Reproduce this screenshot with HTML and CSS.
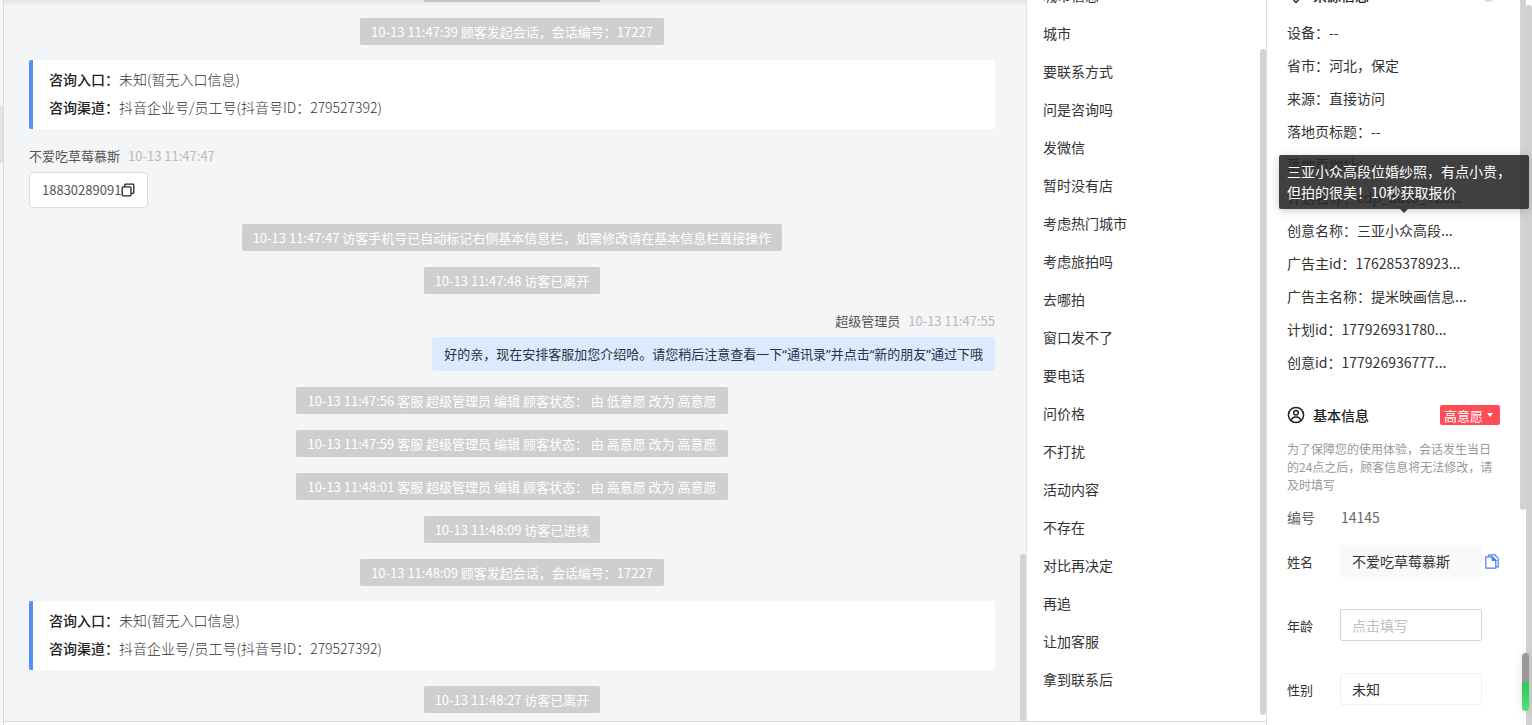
FILE: index.html
```
<!DOCTYPE html>
<html lang="zh-CN">
<head>
    <meta charset="UTF-8">
    <meta name="viewport" content="width=device-width, initial-scale=1.0">
    <title>客服会话</title>
    <link rel="stylesheet" href="styles.css">
</head>
<body>

<div class="gutter"><span class="gutter-mark"></span></div>

<div class="workspace">
    <main class="chat">
        <div class="chat-list">
            <div class="notice">10-13 11:47:36 访客已进线</div>
            <div class="notice">10-13 11:47:39 顾客发起会话，会话编号：17227</div>
            <div class="entry-card">
                <p><strong>咨询入口：</strong>未知(暂无入口信息)</p>
                <p><strong>咨询渠道：</strong>抖音企业号/员工号(抖音号ID：279527392)</p>
            </div>
            <div class="message">
                <div class="message-meta"><span class="author">不爱吃草莓慕斯</span><time>10-13 11:47:47</time></div>
                <div class="bubble visitor">18830289091<button class="icon-btn" type="button" aria-label="复制">
                    <svg width="14" height="14" viewBox="0 0 14 14" fill="none" stroke="#222" stroke-width="1.3"><rect x="1.2" y="3.8" width="8.8" height="9" rx="1"/><path d="M3.8 3.6V2a.8.8 0 0 1 .8-.8H12a.8.8 0 0 1 .8.8v7.6a.8.8 0 0 1-.8.8h-1.8"/></svg>
                </button></div>
            </div>
            <div class="notice">10-13 11:47:47 访客手机号已自动标记右侧基本信息栏，如需修改请在基本信息栏直接操作</div>
            <div class="notice">10-13 11:47:48 访客已离开</div>
            <div class="message mine">
                <div class="message-meta"><span class="author">超级管理员</span><time>10-13 11:47:55</time></div>
                <div class="bubble staff">好的亲，现在安排客服加您介绍哈。请您稍后注意查看一下“通讯录”并点击“新的朋友”通过下哦</div>
            </div>
            <div class="notice">10-13 11:47:56 客服 超级管理员 编辑 顾客状态： 由 低意愿 改为 高意愿</div>
            <div class="notice">10-13 11:47:59 客服 超级管理员 编辑 顾客状态： 由 高意愿 改为 高意愿</div>
            <div class="notice">10-13 11:48:01 客服 超级管理员 编辑 顾客状态： 由 高意愿 改为 高意愿</div>
            <div class="notice">10-13 11:48:09 访客已进线</div>
            <div class="notice">10-13 11:48:09 顾客发起会话，会话编号：17227</div>
            <div class="entry-card">
                <p><strong>咨询入口：</strong>未知(暂无入口信息)</p>
                <p><strong>咨询渠道：</strong>抖音企业号/员工号(抖音号ID：279527392)</p>
            </div>
            <div class="notice">10-13 11:48:27 访客已离开</div>
        </div>
        <span class="scroll-thumb chat-thumb"></span>
    </main>

    <aside class="quick">
        <ul class="quick-list">
            <li>城市信息</li>
            <li>城市</li>
            <li>要联系方式</li>
            <li>问是咨询吗</li>
            <li>发微信</li>
            <li>暂时没有店</li>
            <li>考虑热门城市</li>
            <li>考虑旅拍吗</li>
            <li>去哪拍</li>
            <li>窗口发不了</li>
            <li>要电话</li>
            <li>问价格</li>
            <li>不打扰</li>
            <li>活动内容</li>
            <li>不存在</li>
            <li>对比再决定</li>
            <li>再追</li>
            <li>让加客服</li>
            <li>拿到联系后</li>
        </ul>
        <span class="scroll-thumb quick-thumb"></span>
    </aside>
</div>

<aside class="info">
    <div class="info-body">
        <h3 class="section-title visit-title">
            <svg width="18" height="18" viewBox="0 0 18 18" fill="none" stroke="#333" stroke-width="1.6"><path d="M9 16.5C5.500 13 3.500 10.500 3.500 7.500a5.500 5.500 0 0 1 11 0c0 3-2 5.500-5.500 9z"/><circle cx="9" cy="7.500" r="2"/></svg>
            <span>来源信息</span>
            <i class="title-dot"></i>
        </h3>
        <ul class="visit-list">
            <li>设备：--</li>
            <li>省市：河北，保定</li>
            <li>来源：直接访问</li>
            <li>落地页标题：--</li>
            <li>落地页地址：--</li>
            <li>计划名称：cdp_auto_728...</li>
            <li class="tip-anchor">创意名称：三亚小众高段...
                <div class="tooltip" role="tooltip">三亚小众高段位婚纱照，有点小贵，但拍的很美！10秒获取报价</div>
            </li>
            <li>广告主id：176285378923...</li>
            <li>广告主名称：提米映画信息...</li>
            <li>计划id：177926931780...</li>
            <li>创意id：177926936777...</li>
        </ul>

        <h3 class="section-title">
            <svg width="18" height="18" viewBox="0 0 18 18" fill="none" stroke="#222" stroke-width="1.5"><circle cx="9" cy="9" r="7.600"/><circle cx="9" cy="6.800" r="2.300"/><path d="M4.200 14.200c.5-2.200 2.200-3.200 4.800-3.200s4.300 1 4.800 3.200"/></svg>
            <span>基本信息</span>
            <button class="level-btn" type="button">高意愿<i class="caret"></i></button>
        </h3>
        <p class="hint">为了保障您的使用体验，会话发生当日的24点之后，顾客信息将无法修改，请及时填写</p>

        <div class="number-row"><span class="label">编号</span><span>14145</span></div>
        <div class="form-row">
            <label for="name">姓名</label>
            <input id="name" class="filled" type="text" value="不爱吃草莓慕斯">
            <button class="icon-btn" type="button" aria-label="复制姓名">
                <svg width="14" height="15" viewBox="0 0 14 15" fill="none" stroke="#4c7df0" stroke-width="1.2"><path d="M3.800 2.800V.8h6l3.400 3.400v8.600h-2"/><path d="M.8 2.800h6.400l3.600 3.600v7.800h-10z"/><path d="M7.200 2.800v3.600h3.600z" fill="#4c7df0"/></svg>
            </button>
        </div>
        <div class="form-row">
            <label for="age">年龄</label>
            <input id="age" type="text" placeholder="点击填写">
        </div>
        <div class="form-row">
            <label for="gender">性别</label>
            <select id="gender">
                <option>未知</option>
                <option>男</option>
                <option>女</option>
            </select>
        </div>
    </div>
    <span class="scroll-thumb info-thumb"></span>
    <span class="page-thumb"></span>
    <span class="meter"></span>
</aside>

</body>
</html>
```
FILE: styles.css
```
* {
    box-sizing: border-box;
}
body {
    margin: 0;
    height: 100vh;
    display: flex;
    overflow: hidden;
    background-color: #ffffff;
    font-family: "Noto Sans CJK SC", sans-serif;
    font-size: 14px;
    color: #333333;
}
ul, p, h3 {
    margin: 0;
    padding: 0;
    list-style: none;
}
button, input, select {
    font-family: inherit;
}
.icon-btn {
    display: flex;
    padding: 0;
    border: none;
    background: none;
    cursor: pointer;
}
.scroll-thumb {
    position: absolute;
    right: 0;
    width: 6px;
    border-radius: 3px;
    background-color: #d3d3d4;
}

/* 左侧边缘 */
.gutter {
    flex: none;
    width: 4px;
    padding-top: 105px;
    border-right: 1px solid #d9dadc;
    background-color: #f6f7f9;
}
.gutter-mark {
    display: block;
    height: 58px;
    background-color: #e4e5e7;
}

.workspace {
    flex: 1;
    min-width: 0;
    display: flex;
    margin-bottom: 3px;
    border-bottom: 1px solid #d9dadc;
}

/* 会话区 */
.chat {
    position: relative;
    flex: 1;
    min-width: 0;
    overflow: hidden;
    background-color: #f3f5f7;
}
.chat::before {
    content: "";
    position: absolute;
    top: 0;
    left: 0;
    right: 0;
    height: 6px;
    background: linear-gradient(rgba(0, 0, 0, 0.07), rgba(0, 0, 0, 0));
}
.chat-list {
    height: 100%;
    display: flex;
    flex-direction: column;
    justify-content: flex-end;
    padding: 0 31px 8px 25px;
    font-size: 13px;
}
.notice {
    align-self: center;
    margin-top: 16px;
    padding: 1px 11px 0;
    line-height: 26px;
    border-radius: 2px;
    background-color: #cecfd1;
    color: #ffffff;
}
.entry-card {
    margin-top: 15px;
    padding: 5px 16px 8px;
    border-left: 4px solid #5590f6;
    border-radius: 2px;
    background-color: #ffffff;
    font-size: 14px;
    font-weight: 300;
    line-height: 28px;
}
.entry-card strong {
    font-weight: 500;
    color: #222222;
}
.message {
    margin-top: 16px;
    display: flex;
    flex-direction: column;
    align-items: flex-start;
}
.message.mine {
    align-items: flex-end;
}
.message-meta {
    display: flex;
    gap: 8px;
    margin-bottom: 5px;
    line-height: 22px;
    color: #555555;
}
.message-meta time {
    color: #b8babd;
}
.bubble {
    display: flex;
    align-items: center;
    padding: 0 12px;
    border-radius: 4px;
    line-height: 34px;
}
.bubble.visitor {
    border: 1px solid #d9dbdf;
    background-color: #ffffff;
    color: #555555;
}
.bubble.staff {
    background-color: #dce9ff;
    font-family: "Noto Sans", "Noto Sans CJK SC", sans-serif;
    color: #2b3340;
}
.chat-thumb {
    top: 554px;
    bottom: 0;
}

/* 快捷回复 */
.quick {
    position: relative;
    flex: none;
    width: 240px;
    overflow: hidden;
    border-left: 1px solid #e3e4e6;
}
.quick-list {
    height: 100%;
    display: flex;
    flex-direction: column;
    justify-content: flex-end;
    padding: 0 16px 23px;
    line-height: 38px;
}
.quick-thumb {
    top: 49px;
    bottom: 6px;
}

/* 访客信息 */
.info {
    position: relative;
    flex: none;
    width: 266px;
    overflow: hidden;
    border-left: 1px solid #dcdddf;
}
.info-body {
    height: 100%;
    display: flex;
    flex-direction: column;
    justify-content: flex-end;
    padding: 0 32px 4px 20px;
}
.section-title {
    display: flex;
    align-items: center;
    gap: 8px;
    height: 24px;
    font-size: 14px;
    font-weight: 500;
    color: #222222;
}
.visit-title {
    margin-bottom: 11px;
}
.title-dot {
    width: 14px;
    height: 14px;
    margin-left: auto;
    margin-right: 4px;
    border-radius: 50%;
    background-color: #d9dadc;
}
.visit-list {
    margin-bottom: 26px;
    line-height: 33px;
}
.tip-anchor {
    position: relative;
}
.tooltip {
    position: absolute;
    left: -8px;
    bottom: 38px;
    z-index: 2;
    width: 250px;
    padding: 6px 8px;
    border-radius: 2px;
    background-color: rgba(38, 38, 38, 0.88);
    box-shadow: 0 2px 8px rgba(0, 0, 0, 0.2);
    line-height: 21px;
    color: #ffffff;
}
.tooltip::after {
    content: "";
    position: absolute;
    top: 100%;
    left: 50%;
    margin-left: -4px;
    border: 4px solid transparent;
    border-top-color: #3c3c3c;
    border-bottom: none;
}
.level-btn {
    display: flex;
    align-items: center;
    gap: 4px;
    width: 60px;
    height: 20px;
    margin-left: auto;
    padding: 0 4px;
    border: none;
    border-radius: 2px;
    background-color: #ff4d57;
    font-size: 13px;
    white-space: nowrap;
    color: #ffffff;
    cursor: pointer;
}
.caret {
    border: 3px solid transparent;
    border-top: 4px solid #ffffff;
    border-bottom: none;
}
.hint {
    margin-top: 15px;
    font-size: 12px;
    line-height: 18px;
    color: #999999;
}
.number-row {
    display: flex;
    margin: 12px 0 17px;
    line-height: 22px;
    color: #666666;
}
.number-row .label {
    width: 54px;
}
.form-row {
    display: flex;
    align-items: center;
    height: 32px;
    margin-bottom: 32px;
}
.form-row:last-child {
    margin-bottom: 16px;
}
.form-row label {
    flex: none;
    width: 53px;
    font-size: 13px;
}
.form-row input,
.form-row select {
    flex: none;
    width: 142px;
    height: 32px;
    padding: 0 11px;
    border: 1px solid #d4d5d7;
    border-radius: 2px;
    background-color: #ffffff;
    font-size: 14px;
    color: #333333;
    appearance: none;
}
.form-row input::placeholder {
    color: #c0c0c0;
}
.form-row input.filled {
    border-color: #f9f9f9;
    background-color: #f9f9f9;
}
.form-row select {
    border-color: #f0f0f0;
}
.form-row .icon-btn {
    margin-left: 3px;
}
.info-thumb {
    top: -6px;
    right: 6px;
    height: 516px;
}
.page-thumb {
    position: absolute;
    top: 5px;
    right: 0;
    bottom: -6px;
    width: 6px;
    border-radius: 3px;
    background-color: #d0d0d1;
}
/* 音量条 */
.meter {
    position: absolute;
    right: 3px;
    bottom: 14px;
    width: 7px;
    height: 58px;
    border-radius: 4px;
    background: linear-gradient(#999999 50%, #2bc85a 50%, #4fe07c);
    box-shadow: 0 0 8px rgba(0, 0, 0, 0.12);
}
```
